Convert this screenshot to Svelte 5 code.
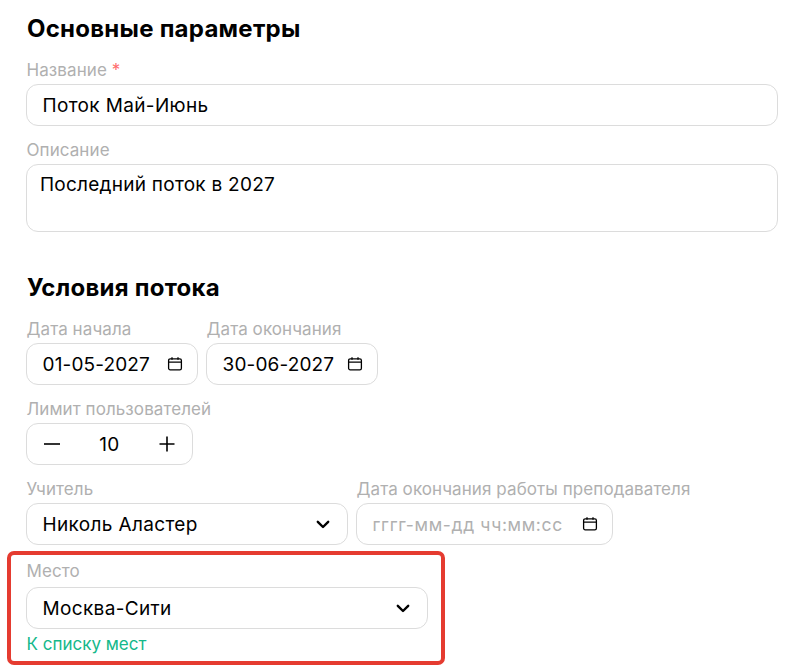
<script lang="ts">
  let limit = $state(10);
</script>

{#snippet calendar()}
  <svg class="cal" viewBox="0 0 16 16" width="16" height="16" fill="none" stroke="currentColor" stroke-width="1.3">
    <rect x="1.6" y="2.8" width="12.8" height="11" rx="1.6" />
    <path d="M1.6 6.2h12.8M5 1.2v2.6M11 1.2v2.6" />
  </svg>
{/snippet}

{#snippet chevron()}
  <svg class="chev" viewBox="0 0 14 9" width="14" height="9" fill="none" stroke="currentColor" stroke-width="2.4" stroke-linecap="round" stroke-linejoin="round">
    <path d="M1.8 1.8 7 7l5.2-5.2" />
  </svg>
{/snippet}

<main class="page">
  <h2>Основные параметры</h2>
  <div class="field">
    <span class="label">Название <span class="req">*</span></span>
    <div class="box">Поток Май-Июнь</div>
  </div>
  <div class="field">
    <span class="label">Описание</span>
    <div class="box area">Последний поток в 2027</div>
  </div>

  <h2 class="second">Условия потока</h2>
  <div class="row">
    <div class="field">
      <span class="label">Дата начала</span>
      <div class="box date"><span>01-05-2027</span>{@render calendar()}</div>
    </div>
    <div class="field">
      <span class="label">Дата окончания</span>
      <div class="box date"><span>30-06-2027</span>{@render calendar()}</div>
    </div>
  </div>
  <div class="field">
    <span class="label">Лимит пользователей</span>
    <div class="box stepper">
      <svg viewBox="0 0 16 16" width="16" height="16" stroke="currentColor" stroke-width="1.6"><path d="M0 8h16" /></svg>
      <span>{limit}</span>
      <svg viewBox="0 0 16 16" width="16" height="16" stroke="currentColor" stroke-width="1.6"><path d="M0.5 8h15M8 0.5v15" /></svg>
    </div>
  </div>
  <div class="row">
    <div class="field">
      <span class="label">Учитель</span>
      <div class="box select teacher"><span>Николь Аластер</span>{@render chevron()}</div>
    </div>
    <div class="field">
      <span class="label">Дата окончания работы преподавателя</span>
      <div class="box datetime"><span class="placeholder">гггг-мм-дд чч:мм:сс</span>{@render calendar()}</div>
    </div>
  </div>
  <div class="field place">
    <span class="label">Место</span>
    <div class="box select"><span>Москва-Сити</span>{@render chevron()}</div>
    <span class="link">К списку мест</span>
    <div class="highlight"></div>
  </div>
</main>

<style>
  :global(body) {
    margin: 0;
    background: #fff;
  }
  .page {
    width: 810px;
    height: 672px;
    box-sizing: border-box;
    padding: 15px 32px 0 26px;
    overflow: hidden;
    font-family: Inter, "Noto Sans", sans-serif;
    color: #000;
  }
  h2 {
    margin: 0 0 17px 1px;
    font-size: 24px;
    line-height: 28px;
    font-weight: 700;
    letter-spacing: 0.25px;
  }
  h2.second {
    margin-top: 42px;
  }
  .field {
    display: flex;
    flex-direction: column;
    margin-bottom: 14px;
  }
  .label {
    height: 24px;
    margin-left: 0.5px;
    font-size: 17px;
    line-height: 20px;
    letter-spacing: 0.08px;
    color: #b0b0b0;
    white-space: nowrap;
  }
  .req {
    color: #ff6b6b;
  }
  .box {
    display: flex;
    align-items: center;
    box-sizing: border-box;
    height: 42px;
    padding: 0 16px 0 15.5px;
    border: 1px solid #dcdcdc;
    border-radius: 12px;
    font-size: 19px;
    letter-spacing: 0.35px;
    white-space: nowrap;
  }
  .area {
    height: 68px;
    align-items: flex-start;
    padding: 8px 13px;
    line-height: 24px;
    letter-spacing: 0.25px;
  }
  .row {
    display: flex;
    gap: 8px;
  }
  .date {
    width: 172px;
    justify-content: space-between;
    padding-right: 14px;
    letter-spacing: 0.15px;
  }
  .stepper {
    width: 167px;
    justify-content: space-between;
    padding: 0 17px;
  }
  .select {
    justify-content: space-between;
  }
  .teacher {
    width: 322px;
  }
  .datetime {
    width: 257px;
    justify-content: space-between;
    padding-right: 14px;
  }
  .placeholder {
    color: #b0b0b0;
    font-size: 17.5px;
    letter-spacing: 0.66px;
  }
  .place {
    position: relative;
    width: 402px;
    margin: 0;
    padding-top: 2px;
  }
  .place .label {
    height: 26px;
  }
  .link {
    margin: 5px 0 0 0.5px;
    font-size: 17px;
    line-height: 20px;
    color: #14b88a;
  }
  .highlight {
    position: absolute;
    left: -19px;
    right: -17px;
    top: -8px;
    height: 114px;
    box-sizing: border-box;
    border: 4px solid #e53b30;
    border-radius: 7px;
    pointer-events: none;
  }
  .cal {
    flex: none;
  }
  .chev {
    flex: none;
    margin-right: 1px;
  }
</style>
